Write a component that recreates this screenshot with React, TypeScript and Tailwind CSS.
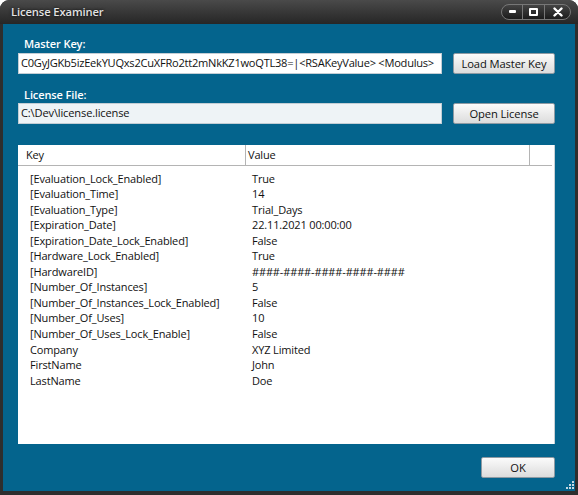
import React from 'react';

const rows = [
    { key: '[Evaluation_Lock_Enabled]', value: 'True' },
    { key: '[Evaluation_Time]', value: '14' },
    { key: '[Evaluation_Type]', value: 'Trial_Days' },
    { key: '[Expiration_Date]', value: '22.11.2021 00:00:00' },
    { key: '[Expiration_Date_Lock_Enabled]', value: 'False' },
    { key: '[Hardware_Lock_Enabled]', value: 'True' },
    { key: '[HardwareID]', value: '####-####-####-####-####' },
    { key: '[Number_Of_Instances]', value: '5' },
    { key: '[Number_Of_Instances_Lock_Enabled]', value: 'False' },
    { key: '[Number_Of_Uses]', value: '10' },
    { key: '[Number_Of_Uses_Lock_Enable]', value: 'False' },
    { key: 'Company', value: 'XYZ Limited' },
    { key: 'FirstName', value: 'John' },
    { key: 'LastName', value: 'Doe' },
];

const font = { fontFamily: '"Open Sans", "Noto Sans", sans-serif' };

const WinButton = ({ label, onClick }: { label: string; onClick?: () => void }) => (
    <button
        onClick={onClick}
        className="w-[102px] h-[21px] border border-[#8e9aa3] rounded-[2px] bg-gradient-to-b from-[#fbfbfb] to-[#dcdcdc] text-[11.2px] tracking-[-0.1px] text-[#111] leading-none whitespace-nowrap"
    >
        {label}
    </button>
);

const App = () => {
    return (
        <div className="w-[578px] h-[495px] bg-white" style={font}>
            <div className="h-full flex flex-col rounded-t-[9px] bg-[#2e2e2e] overflow-hidden relative">
                {/* title bar */}
                <div className="h-[24px] shrink-0 flex items-center justify-between pl-[11px] pr-[7px] bg-gradient-to-b from-[#4a4a4a] to-[#262626]">
                    <span
                        className="text-[11.2px] font-semibold tracking-[-0.1px] text-[#e2e2e2] leading-none"
                        style={{ textShadow: '0 0 3px #000' }}
                    >
                        License Examiner
                    </span>
                    <div className="flex h-[16px] mt-[-1px] rounded-full border border-[#777] bg-gradient-to-b from-[#444] to-[#1c1c1c] overflow-hidden">
                        <div className="w-[21px] flex items-center justify-center border-r border-[#777]">
                            <div className="w-[7px] h-[3px] bg-white rounded-[1px]" />
                        </div>
                        <div className="w-[22px] flex items-center justify-center border-r border-[#777]">
                            <div className="w-[9px] h-[8px] border-[2px] border-white rounded-[1px]" />
                        </div>
                        <div className="w-[25px] flex items-center justify-center">
                            <svg width="10" height="10" viewBox="0 0 10 10">
                                <path d="M1.5 1.5 L8.5 8.5 M8.5 1.5 L1.5 8.5" stroke="white" strokeWidth="2.4" strokeLinecap="round" />
                            </svg>
                        </div>
                    </div>
                </div>

                {/* body */}
                <div className="flex-1 mx-[3px] mb-[4px] bg-[#04648d] flex flex-col pl-[15px] pr-[20px] pt-[12px] relative">
                    <label className="h-[16px] leading-[16px] pl-[6px] text-[11px] font-semibold tracking-[-0.1px] text-white">Master Key:</label>
                    <div className="mt-[1px] flex gap-[11px]">
                        <div className="flex-1 h-[21px] bg-white border border-[#c3cdd4] flex items-center pl-[2px] overflow-hidden whitespace-nowrap text-[11.1px] tracking-[-0.25px] text-[#111]">
                            C0GyJGKb5izEekYUQxs2CuXFRo2tt2mNkKZ1woQTL38=|&lt;RSAKeyValue&gt; &lt;Modulus&gt;
                        </div>
                        <WinButton label="Load Master Key" />
                    </div>

                    <label className="mt-[13px] h-[16px] leading-[16px] pl-[6px] text-[11px] font-semibold tracking-[-0.1px] text-white">License File:</label>
                    <div className="flex gap-[11px]">
                        <div className="flex-1 h-[21px] bg-[#eef3f6] border border-[#c3cdd4] flex items-center pl-[2px] overflow-hidden whitespace-nowrap text-[11.1px] tracking-[-0.15px] text-[#111]">
                            C:\Dev\license.license
                        </div>
                        <WinButton label="Open License" />
                    </div>

                    {/* list */}
                    <div className="mt-[21px] h-[299px] bg-white border-r border-[#c9d1d6] flex flex-col text-[11px] tracking-[-0.15px] text-[#111]">
                        <div className="h-[21px] shrink-0 flex items-center border-b border-[#b4b4b4] mr-[2px]">
                            <div className="w-[228px] pl-[8px] h-full flex items-center border-r border-[#b4b4b4]">Key</div>
                            <div className="w-[284px] pl-[2px] h-full flex items-center border-r border-[#b4b4b4]">Value</div>
                            <div className="flex-1" />
                        </div>
                        <div className="pt-[5px]">
                            {rows.map((row) => (
                                <div key={row.key} className="h-[15.55px] flex items-center whitespace-nowrap">
                                    <div className="w-[228px] pl-[12px]">{row.key}</div>
                                    <div className="pl-[6px]">{row.value}</div>
                                </div>
                            ))}
                        </div>
                    </div>

                    <div className="mt-[13px] flex justify-end">
                        <button className="w-[74px] h-[21px] border border-[#8e9aa3] rounded-[2px] bg-gradient-to-b from-[#fbfbfb] to-[#dcdcdc] text-[11.2px] text-[#111] leading-none">
                            OK
                        </button>
                    </div>

                    {/* resize grip */}
                    <svg className="absolute right-[1px] bottom-[1px]" width="10" height="10" viewBox="0 0 10 10">
                        {[[8, 0], [8, 3], [5, 3], [8, 6], [5, 6], [2, 6]].map(([x, y]) => (
                            <rect key={`${x}-${y}`} x={x} y={y + 1} width="2" height="2" fill="#c6d8e2" />
                        ))}
                    </svg>
                </div>
            </div>
        </div>
    );
};

export default App;
